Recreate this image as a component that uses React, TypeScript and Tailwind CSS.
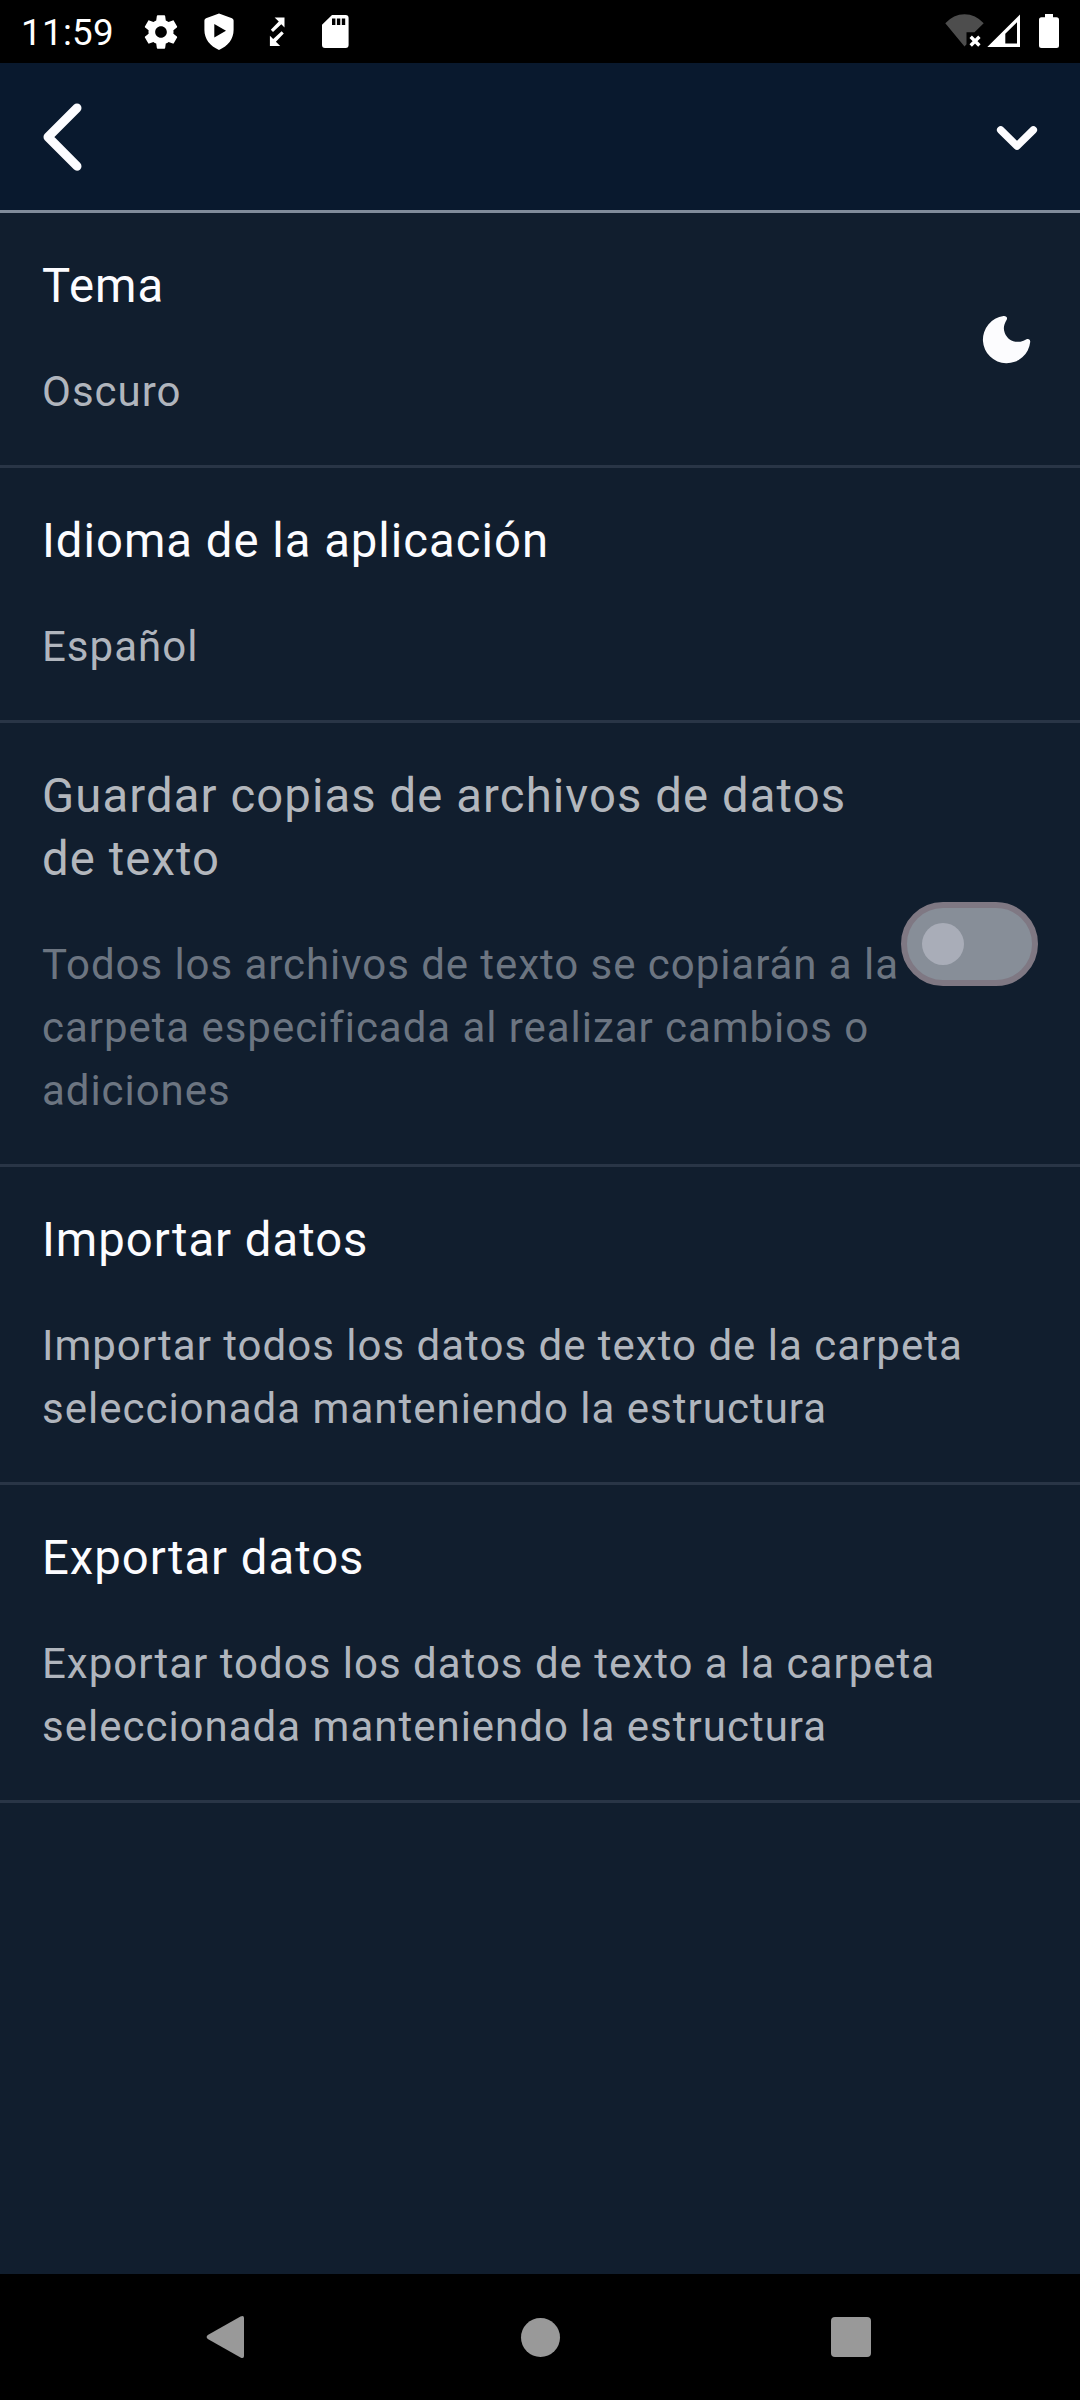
import type { ReactNode } from "react";

function StatusBar() {
  return (
    <div className="flex h-[63px] shrink-0 items-start bg-black text-white">
      <span className="ml-[21px] w-[124px] text-[36.75px] leading-[66px] tracking-[0.3px]">11:59</span>
      <svg className="mt-[12px] -ml-[4px] h-[40px] w-[40px]" viewBox="0 0 24 24" fill="currentColor">
        <path d="M19.43 12.98c.04-.32.07-.64.07-.98s-.03-.66-.07-.98l2.11-1.65c.19-.15.24-.42.12-.64l-2-3.46c-.12-.22-.39-.3-.61-.22l-2.49 1c-.52-.4-1.08-.73-1.69-.98l-.38-2.65C14.46 2.18 14.25 2 14 2h-4c-.25 0-.46.18-.49.42l-.38 2.65c-.61.25-1.17.59-1.69.98l-2.49-1c-.23-.09-.49 0-.61.22l-2 3.46c-.13.22-.07.49.12.64l2.11 1.65c-.04.32-.07.65-.07.98s.03.66.07.98l-2.11 1.65c-.19.15-.24.42-.12.64l2 3.46c.12.22.39.3.61.22l2.49-1c.52.4 1.08.73 1.69.98l.38 2.65c.03.24.24.42.49.42h4c.25 0 .46-.18.49-.42l.38-2.65c.61-.25 1.17-.59 1.69-.98l2.49 1c.23.09.49 0 .61-.22l2-3.46c.12-.22.07-.49-.12-.64l-2.11-1.65zM12 15.5c-1.93 0-3.5-1.57-3.5-3.5s1.57-3.5 3.5-3.5 3.5 1.57 3.5 3.5-1.57 3.5-3.5 3.5z" />
      </svg>
      <svg className="mt-[13px] ml-[23px] h-[37px] w-[30px]" viewBox="0 0 30 37" fill="currentColor" fillRule="evenodd">
        <path d="M15 .6 28 5.2Q29.6 5.8 29.6 7.6V17C29.6 26 24 33 15 37 6 33 .4 26 .4 17V7.600Q.4 5.800 2 5.200ZM10.300 11V24.500L22 17.800Z" />
      </svg>
      <svg className="mt-[16px] ml-[35px] h-[31px] w-[17px]" viewBox="0 0 17 31" fill="currentColor">
        <path d="M5.600 1.500H15.500V11.400L12.300 8.200 4 16 1.800 13.800 9.800 5.600ZM11.200 30H.9V19.800L4.200 23.100 12.600 15.200 14.800 17.400 6.900 25.800Z" />
      </svg>
      <svg className="mt-[15px] ml-[36px] h-[33px] w-[27px]" viewBox="0 0 27 33" fill="currentColor" fillRule="evenodd">
        <path d="M10 0H23.600Q26.600 0 26.600 3V30Q26.600 33 23.600 33H3Q0 33 0 30V9.800ZM10 3.500V10H13.400V3.500ZM14.900 3.500V10H18.300V3.500ZM19.800 3.500V10H23.200V3.500Z" />
      </svg>
      <svg className="mt-[13px] ml-auto h-[35px] w-[39px]" viewBox="0 0 39 35">
        <path d="M.3 10.200Q8.500 1.200 19.500 1.200T38.700 10.200L29.500 19.200H21.500V31.300L19.500 33.500Z" fill="#4d4d4d" />
        <path d="m25.700 23.700 8.700 8.800m0-8.800-8.700 8.800" stroke="currentColor" strokeWidth="3.400" fill="none" />
      </svg>
      <svg className="mt-[14px] ml-[3px] h-[33px] w-[33px]" viewBox="0 0 33 33" fill="currentColor" fillRule="evenodd">
        <path d="M33 .5V33H.3ZM30 8.200 18.300 19.700V29.500H30Z" />
      </svg>
      <svg className="mt-[14px] mr-[21px] ml-[19px] h-[34px] w-[20px]" viewBox="0 0 20 34" fill="currentColor">
        <path d="M6 0H14V3.300H17.500Q20 3.300 20 5.800V31.500Q20 34 17.500 34H2.500Q0 34 0 31.500V5.800Q0 3.300 2.500 3.300H6Z" />
      </svg>
    </div>
  );
}

function Header() {
  return (
    <header className="flex h-[150px] shrink-0 items-center justify-between border-b-[3px] border-[#818c9b] bg-[#09192e] px-[42px] text-[#fcfcff]">
      <button aria-label="Atrás">
        <svg className="h-[70px] w-[42px]" viewBox="0 0 42 70" fill="none" stroke="currentColor" strokeWidth="9" strokeLinecap="round" strokeLinejoin="round">
          <path d="M35 6 6 35 35 64.200" />
        </svg>
      </button>
      <button aria-label="Más opciones">
        <svg className="h-[28px] w-[42px]" viewBox="0 0 42 28" fill="none" stroke="currentColor" strokeWidth="7.500" strokeLinecap="round" strokeLinejoin="round">
          <path d="M4.700 7 21 23 37.300 7" />
        </svg>
      </button>
    </header>
  );
}

function Moon() {
  return (
    <svg className="mr-[7px] h-[49px] w-[49px] shrink-0" viewBox="0 0 49 49" fill="#fcfcfe">
      <path d="M21.500 1.100C23.800 .8 25.800 2.300 24.800 4.500 21.500 10 21.200 14 22.800 18 25.500 25 33 29 41.500 25.700L44.500 24.300C46.800 23.400 48.500 24.900 48.200 27A23.700 23.700 0 1 1 21.500 1.100Z" />
    </svg>
  );
}

function Toggle() {
  return (
    <div role="switch" aria-checked="false" aria-disabled="true" className="flex h-[84px] w-[137px] shrink-0 items-center rounded-full border-[6px] border-[#7f7883] bg-[#878e98] pl-[15px]">
      <div className="h-[42px] w-[42px] rounded-full bg-[#a9adb8]" />
    </div>
  );
}

type RowProps = { title: string; detail: string; disabled?: boolean; children?: ReactNode };

function SettingRow({ title, detail, disabled, children }: RowProps) {
  return (
    <section className="flex items-center justify-between border-b-[3px] border-[#293546] px-[42px] py-[42px]">
      <div className="flex min-w-0 flex-1 flex-col gap-[42px] leading-[63px]">
        <h2 className={disabled ? "text-[47.25px] tracking-[1.1px] text-[#b3b7bd]" : "text-[47.25px] tracking-[1px] text-[#fcfcff]"}>{title}</h2>
        <p className={disabled ? "text-[42px] tracking-[0.95px] text-[#6c7581]" : "text-[42px] tracking-[1px] text-[#b0b5bd]"}>{detail}</p>
      </div>
      {children}
    </section>
  );
}

function NavBar() {
  return (
    <nav className="flex h-[126px] shrink-0 items-center justify-between bg-black pr-[209px] pl-[206px]">
      <svg className="h-[44px] w-[38px]" viewBox="0 0 38 44" fill="#999">
        <path d="M34.500 1.500Q38 0 38 3V41Q38 44 34.500 42.500L1.800 24Q-.5 22 1.800 20Z" />
      </svg>
      <div className="mr-[-5px] h-[39px] w-[39px] rounded-full bg-[#999]" />
      <div className="h-[40px] w-[40px] rounded-[4px] bg-[#999]" />
    </nav>
  );
}

export default function App() {
  return (
    <div className="flex h-[2400px] w-[1080px] flex-col overflow-hidden bg-[#111e2e] font-['Roboto',sans-serif]">
      <StatusBar />
      <Header />
      <main className="flex-1">
        <SettingRow title="Tema" detail="Oscuro">
          <Moon />
        </SettingRow>
        <SettingRow title="Idioma de la aplicación" detail="Español" />
        <SettingRow title="Guardar copias de archivos de datos de texto" detail="Todos los archivos de texto se copiarán a la carpeta especificada al realizar cambios o adiciones" disabled>
          <Toggle />
        </SettingRow>
        <SettingRow title="Importar datos" detail="Importar todos los datos de texto de la carpeta seleccionada manteniendo la estructura" />
        <SettingRow title="Exportar datos" detail="Exportar todos los datos de texto a la carpeta seleccionada manteniendo la estructura" />
      </main>
      <NavBar />
    </div>
  );
}
